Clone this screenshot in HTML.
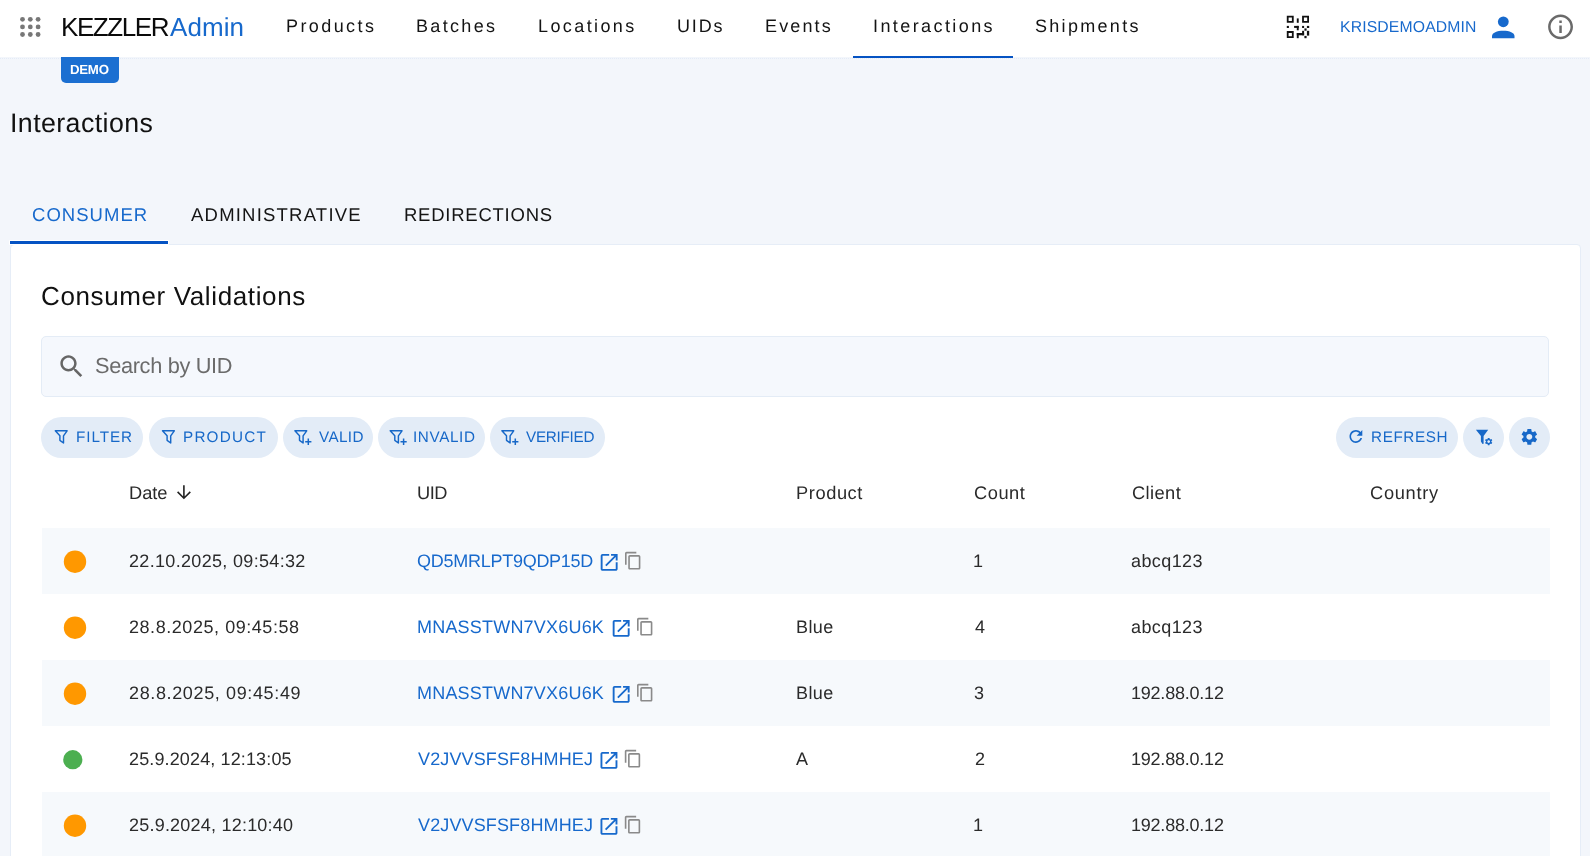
<!DOCTYPE html>
<html><head><meta charset="utf-8"><title>Interactions</title>
<style>
html,body{margin:0;padding:0}
body{width:1590px;height:856px;overflow:hidden;position:relative;background:#f3f6fb;font-family:"Liberation Sans",sans-serif}
.t{position:absolute;line-height:0;white-space:nowrap;text-rendering:geometricPrecision;will-change:transform}
.a{position:absolute}
.chip{position:absolute;top:417px;height:40.5px;border-radius:21px;background:#e3ecf7}
.row{position:absolute;left:41.5px;width:1508px;height:66px}
.st{background:#f6f9fc}
svg{position:absolute;overflow:visible}
</style></head><body>
<div class='a' style='left:0;top:0;width:1590px;height:57px;background:#fff'></div>
<div class='a' style='left:0;top:58px;width:1590px;height:1px;background:repeating-linear-gradient(90deg,#e4ebf7 0 1px,transparent 1px 2px)'></div>
<svg style='left:0;top:0' width='60' height='57'><g fill='#777'><circle cx='22.5' cy='19.3' r='2.4'/><circle cx='22.5' cy='26.9' r='2.4'/><circle cx='22.5' cy='34.5' r='2.4'/><circle cx='30.3' cy='19.3' r='2.4'/><circle cx='30.3' cy='26.9' r='2.4'/><circle cx='30.3' cy='34.5' r='2.4'/><circle cx='38.1' cy='19.3' r='2.4'/><circle cx='38.1' cy='26.9' r='2.4'/><circle cx='38.1' cy='34.5' r='2.4'/></g></svg>
<div class='t' style='left:60.6px;top:27.3px;font-size:26.0px;letter-spacing:-1.417px;color:#0a0a0a;'>KEZZLER</div>
<div class='t' style='left:170.1px;top:27.3px;font-size:26.0px;letter-spacing:0.075px;color:#1769cc;'>Admin</div>
<div class='t' style='left:285.6px;top:25.9px;font-size:18.0px;letter-spacing:2.414px;color:#141414;'>Products</div>
<div class='t' style='left:416px;top:25.9px;font-size:18.0px;letter-spacing:2.333px;color:#141414;'>Batches</div>
<div class='t' style='left:537.6px;top:25.9px;font-size:18.0px;letter-spacing:2.4px;color:#141414;'>Locations</div>
<div class='t' style='left:677px;top:25.9px;font-size:18.0px;letter-spacing:1.833px;color:#141414;'>UIDs</div>
<div class='t' style='left:765.4px;top:25.9px;font-size:18.0px;letter-spacing:2.12px;color:#141414;'>Events</div>
<div class='t' style='left:873px;top:25.9px;font-size:18.0px;letter-spacing:2.409px;color:#141414;'>Interactions</div>
<div class='t' style='left:1035px;top:25.9px;font-size:18.0px;letter-spacing:2.3px;color:#141414;'>Shipments</div>
<div class='a' style='left:852.5px;top:56px;width:160.5px;height:2px;background:#0553c3'></div>
<div class='a' style='left:61px;top:57px;width:58px;height:25.5px;background:#1b6fd1;border-radius:0 0 5px 5px'></div>
<div class='t' style='left:70.3px;top:70.4px;font-size:13.25px;letter-spacing:-0.267px;color:#fff;font-weight:700;'>DEMO</div>
<svg style='left:0;top:0' width='1590' height='57'><g fill='#111'><path fill-rule='evenodd' d='M1286.8 15.8h6.9v6.9h-6.9z M1288.6 17.6v3.3h3.3v-3.3z'/><path fill-rule='evenodd' d='M1302.1 15.8h6.9v6.9h-6.9z M1303.8999999999999 17.6v3.3h3.3v-3.3z'/><path fill-rule='evenodd' d='M1286.8 31.1h6.9v6.9h-6.9z M1288.6 32.9v3.3h3.3v-3.3z'/><rect x='1296.8' y='18.4' width='1.9' height='4.4'/><rect x='1286.8' y='25.9' width='2.1' height='2.1'/><rect x='1294.1' y='25.9' width='4.6' height='2.0'/><rect x='1296.8' y='25.9' width='1.9' height='4.4'/><rect x='1302.1' y='25.9' width='2.0' height='2.1'/><rect x='1306.9' y='25.9' width='2.3' height='2.1'/><rect x='1304.4' y='28.4' width='2.2' height='2.3'/><rect x='1306.9' y='30.8' width='2.3' height='4.8'/><rect x='1302.1' y='30.8' width='2.0' height='4.5'/><rect x='1296.8' y='33.0' width='7.3' height='2.3'/><rect x='1296.8' y='33.0' width='1.9' height='5.2'/><rect x='1304.4' y='35.9' width='2.2' height='2.3'/></g></svg>
<div class='t' style='left:1339.8px;top:27.8px;font-size:15.75px;letter-spacing:0.142px;color:#1769cc;'>KRISDEMOADMIN</div>
<svg style='left:0;top:0' width='1590' height='57'><g fill='#1769cc'><circle cx='1503.3' cy='21.8' r='5.4'/><path d='M1492 38.2v-2.2c0-3.3 5-5.3 11.25-5.3s11.25 2 11.25 5.3v2.2z'/></g></svg>
<svg style='left:0;top:0' width='1590' height='57'><path fill='#6a6a6a' transform='translate(1545.6 11.9) scale(1.245)' d='M11 7h2v2h-2zm0 4h2v6h-2zm1-9C6.48 2 2 6.48 2 12s4.48 10 10 10 10-4.48 10-10S17.52 2 12 2zm0 18c-4.41 0-8-3.59-8-8s3.59-8 8-8 8 3.59 8 8-3.59 8-8 8z'/></svg>
<div class='t' style='left:9.8px;top:123.1px;font-size:26.75px;letter-spacing:0.418px;color:#111;'>Interactions</div>
<div class='t' style='left:31.7px;top:214.5px;font-size:18.5px;letter-spacing:1.029px;color:#1769cc;'>CONSUMER</div>
<div class='t' style='left:190.8px;top:214.5px;font-size:18.5px;letter-spacing:1.215px;color:#141414;'>ADMINISTRATIVE</div>
<div class='t' style='left:403.5px;top:214.5px;font-size:18.5px;letter-spacing:0.755px;color:#141414;'>REDIRECTIONS</div>
<div class='a' style='left:10px;top:244px;width:1569px;height:640px;background:#fff;border:1px solid #e6edf7;border-radius:4px'></div>
<div class='a' style='left:9px;top:240px;width:159.5px;height:5px;background:#fff;border-radius:1px'></div>
<div class='a' style='left:10px;top:241px;width:157.5px;height:3px;background:#0553c3'></div>
<div class='t' style='left:41.3px;top:295.5px;font-size:26.0px;letter-spacing:0.621px;color:#111;'>Consumer Validations</div>
<div class='a' style='left:41px;top:336px;width:1506px;height:58.5px;background:#f5f8fd;border:1px solid #e4ecf6;border-radius:5px'></div>
<svg style='left:0;top:0' width='1590' height='856'><path fill='#666' transform='translate(56.6 351.4) scale(1.252)' d='M15.5 14h-.79l-.28-.27C15.41 12.59 16 11.11 16 9.5 16 5.91 13.09 3 9.5 3S3 5.91 3 9.5 5.91 16 9.5 16c1.61 0 3.09-.59 4.23-1.57l.27.28v.79l5 4.99L20.49 19l-4.99-5zm-6 0C7.01 14 5 11.99 5 9.5S7.01 5 9.5 5 14 7.01 14 9.5 11.99 14 9.5 14z'/></svg>
<div class='t' style='left:94.7px;top:366.2px;font-size:21.75px;letter-spacing:-0.333px;color:#6b6b6b;'>Search by UID</div>
<div class='chip' style='left:41.3px;width:102.2px'></div>
<div class='chip' style='left:148.5px;width:129.1px'></div>
<div class='chip' style='left:282.9px;width:89.8px'></div>
<div class='chip' style='left:378.1px;width:106.9px'></div>
<div class='chip' style='left:490.4px;width:114.4px'></div>
<div class='chip' style='left:1335.8px;width:122.2px'></div>
<div class='chip' style='left:1463.1px;width:40.5px'></div>
<div class='chip' style='left:1509px;width:40.5px'></div>
<svg style='left:0;top:0' width='1590' height='856'><path d='M55.30 430.80 L67.10 430.80 L63.50 435.80 L63.50 443.00 L59.90 440.30 L59.90 435.80Z' fill='none' stroke='#1768c8' stroke-width='1.45' stroke-linejoin='round'/><path d='M162.50 430.80 L174.30 430.80 L170.70 435.80 L170.70 443.00 L167.10 440.30 L167.10 435.80Z' fill='none' stroke='#1768c8' stroke-width='1.45' stroke-linejoin='round'/><path d='M294.90 430.80 L306.70 430.80 L303.10 435.80 L303.10 443.00 L299.50 440.30 L299.50 435.80Z' fill='none' stroke='#1768c8' stroke-width='1.45' stroke-linejoin='round'/><path d='M305.2 441.8h6.2M308.3 438.6v6.4' stroke='#1768c8' stroke-width='1.5'/><path d='M390.20 430.80 L402.00 430.80 L398.40 435.80 L398.40 443.00 L394.80 440.30 L394.80 435.80Z' fill='none' stroke='#1768c8' stroke-width='1.45' stroke-linejoin='round'/><path d='M400.5 441.8h6.2M403.6 438.6v6.4' stroke='#1768c8' stroke-width='1.5'/><path d='M501.90 430.80 L513.70 430.80 L510.10 435.80 L510.10 443.00 L506.50 440.30 L506.50 435.80Z' fill='none' stroke='#1768c8' stroke-width='1.45' stroke-linejoin='round'/><path d='M512.1999999999999 441.8h6.2M515.3 438.6v6.4' stroke='#1768c8' stroke-width='1.5'/></svg>
<div class='t' style='left:76.1px;top:438.2px;font-size:15.25px;letter-spacing:0.92px;color:#1768c8;'>FILTER</div>
<div class='t' style='left:183px;top:438.2px;font-size:15.25px;letter-spacing:1.217px;color:#1768c8;'>PRODUCT</div>
<div class='t' style='left:318.8px;top:438.2px;font-size:15.25px;letter-spacing:0.375px;color:#1768c8;'>VALID</div>
<div class='t' style='left:412.6px;top:438.2px;font-size:15.25px;letter-spacing:0.617px;color:#1768c8;'>INVALID</div>
<div class='t' style='left:525.6px;top:438.2px;font-size:15.25px;letter-spacing:-0.271px;color:#1768c8;'>VERIFIED</div>
<div class='t' style='left:1370.7px;top:438.2px;font-size:15.25px;letter-spacing:0.617px;color:#1768c8;'>REFRESH</div>
<svg style='left:0;top:0' width='1590' height='856'><path fill='#1768c8' transform='translate(1346.3 426.9) scale(0.8)' d='M17.65 6.35C16.2 4.9 14.21 4 12 4c-4.42 0-7.99 3.58-7.99 8s3.57 8 7.99 8c3.73 0 6.84-2.55 7.73-6h-2.08c-.82 2.33-3.04 4-5.65 4-3.31 0-6-2.69-6-6s2.69-6 6-6c1.66 0 3.14.69 4.22 1.78L13 11h7V4l-2.35 2.35z'/></svg>
<svg style='left:0;top:0' width='1590' height='856'><path fill='#1768c8' d='M1475.9 429.7h12.3l-4.6 6.4v7.7l-1.1 0.2-1.6-2.4v-5.5z'/><path fill='#1768c8' transform='translate(1484.1 437.0) scale(0.38)' d='M19.14 12.94c.04-.3.06-.61.06-.94 0-.32-.02-.64-.07-.94l2.03-1.58c.18-.14.23-.41.12-.61l-1.92-3.32c-.12-.22-.37-.29-.59-.22l-2.39.96c-.5-.38-1.03-.7-1.62-.94l-.36-2.54c-.04-.24-.24-.41-.48-.41h-3.84c-.24 0-.43.17-.47.41l-.36 2.54c-.59.24-1.130.57-1.62.94l-2.39-.96c-.22-.08-.47 0-.59.22L2.74 8.87c-.12.21-.08.47.12.61l2.03 1.58c-.05.3-.09.63-.09.94s.02.64.07.94l-2.03 1.58c-.18.14-.23.41-.12.61l1.92 3.32c.12.22.37.29.59.22l2.39-.96c.5.38 1.03.7 1.62.94l.36 2.54c.05.24.24.41.48.41h3.84c.24 0 .44-.17.47-.41l.36-2.54c.59-.24 1.13-.56 1.62-.94l2.39.96c.22.08.47 0 .59-.22l1.92-3.32c.12-.22.07-.47-.12-.61l-2.010-1.58zM12 15.6c-1.98 0-3.6-1.62-3.6-3.6s1.62-3.6 3.6-3.6 3.6 1.62 3.6 3.6-1.62 3.6-3.6 3.6z'/><path fill='#1768c8' transform='translate(1519.5 427.0) scale(0.82)' d='M19.14 12.94c.04-.3.06-.61.06-.94 0-.32-.02-.64-.07-.94l2.03-1.58c.18-.14.23-.41.12-.61l-1.92-3.32c-.12-.22-.37-.29-.59-.22l-2.39.96c-.5-.38-1.03-.7-1.62-.94l-.36-2.54c-.04-.24-.24-.41-.48-.41h-3.84c-.24 0-.43.17-.47.41l-.36 2.54c-.59.24-1.130.57-1.62.94l-2.39-.96c-.22-.08-.47 0-.59.22L2.74 8.87c-.12.21-.08.47.12.61l2.03 1.58c-.05.3-.09.63-.09.94s.02.64.07.94l-2.03 1.58c-.18.14-.23.41-.12.61l1.92 3.32c.12.22.37.29.59.22l2.39-.96c.5.38 1.03.7 1.62.94l.36 2.54c.05.24.24.41.48.41h3.84c.24 0 .44-.17.47-.41l.36-2.54c.59-.24 1.13-.56 1.62-.94l2.39.96c.22.08.47 0 .59-.22l1.92-3.32c.12-.22.07-.47-.12-.61l-2.010-1.58zM12 15.6c-1.98 0-3.6-1.62-3.6-3.6s1.62-3.6 3.6-3.6 3.6 1.62 3.6 3.6-1.62 3.6-3.6 3.6z'/></svg>
<div class='t' style='left:128.7px;top:492.8px;font-size:18.25px;letter-spacing:-0.033px;color:#2a2a2a;'>Date</div>
<div class='t' style='left:417.4px;top:492.8px;font-size:18.25px;letter-spacing:-0.5px;color:#2a2a2a;'>UID</div>
<div class='t' style='left:796.2px;top:492.8px;font-size:18.25px;letter-spacing:0.583px;color:#2a2a2a;'>Product</div>
<div class='t' style='left:974px;top:492.8px;font-size:18.25px;letter-spacing:0.525px;color:#2a2a2a;'>Count</div>
<div class='t' style='left:1131.6px;top:492.8px;font-size:18.25px;letter-spacing:0.42px;color:#2a2a2a;'>Client</div>
<div class='t' style='left:1370.1px;top:492.8px;font-size:18.25px;letter-spacing:0.7px;color:#2a2a2a;'>Country</div>
<svg style='left:0;top:0' width='1590' height='856'><path d='M183.9 485.2V497.6M177.6 491.9L183.9 498.2L190.3 491.9' fill='none' stroke='#222' stroke-width='1.6'/></svg>
<div class='row st' style='top:528px'></div>
<div class='row' style='top:594px'></div>
<div class='row st' style='top:660px'></div>
<div class='row' style='top:726px'></div>
<div class='row st' style='top:792px'></div>
<svg style='left:0;top:0' width='1590' height='856'><circle cx='75.0' cy='561.7' r='11.2' fill='#ff9800'/><circle cx='75.0' cy='627.7' r='11.2' fill='#ff9800'/><circle cx='75.0' cy='693.7' r='11.2' fill='#ff9800'/><circle cx='72.8' cy='759.7' r='9.6' fill='#4caf50'/><circle cx='75.0' cy='825.7' r='11.2' fill='#ff9800'/></svg>
<div class='t' style='left:128.8px;top:561.3px;font-size:18.0px;letter-spacing:0.326px;color:#2b2b2b;'>22.10.2025, 09:54:32</div>
<div class='t' style='left:417.4px;top:561.3px;font-size:18.0px;letter-spacing:-0.264px;color:#1769cc;'>QD5MRLPT9QDP15D</div>
<div class='t' style='left:128.6px;top:627.3px;font-size:18.0px;letter-spacing:0.55px;color:#2b2b2b;'>28.8.2025, 09:45:58</div>
<div class='t' style='left:417.4px;top:627.3px;font-size:18.0px;letter-spacing:0.2px;color:#1769cc;'>MNASSTWN7VX6U6K</div>
<div class='t' style='left:128.6px;top:693.3px;font-size:18.0px;letter-spacing:0.633px;color:#2b2b2b;'>28.8.2025, 09:45:49</div>
<div class='t' style='left:417.4px;top:693.3px;font-size:18.0px;letter-spacing:0.2px;color:#1769cc;'>MNASSTWN7VX6U6K</div>
<div class='t' style='left:128.6px;top:759.3px;font-size:18.0px;letter-spacing:0.133px;color:#2b2b2b;'>25.9.2024, 12:13:05</div>
<div class='t' style='left:418.4px;top:759.3px;font-size:18.0px;letter-spacing:0.136px;color:#1769cc;'>V2JVVSFSF8HMHEJ</div>
<div class='t' style='left:128.6px;top:825.3px;font-size:18.0px;letter-spacing:0.217px;color:#2b2b2b;'>25.9.2024, 12:10:40</div>
<div class='t' style='left:418.4px;top:825.3px;font-size:18.0px;letter-spacing:0.136px;color:#1769cc;'>V2JVVSFSF8HMHEJ</div>
<div class='t' style='left:796.4px;top:627.3px;font-size:18.0px;letter-spacing:0.433px;color:#2b2b2b;'>Blue</div>
<div class='t' style='left:796.4px;top:693.3px;font-size:18.0px;letter-spacing:0.433px;color:#2b2b2b;'>Blue</div>
<div class='t' style='left:973.0px;top:561.3px;font-size:18px;letter-spacing:0px;color:#2b2b2b;'>1</div>
<div class='t' style='left:974.7px;top:627.3px;font-size:18px;letter-spacing:0px;color:#2b2b2b;'>4</div>
<div class='t' style='left:973.7px;top:693.3px;font-size:18px;letter-spacing:0px;color:#2b2b2b;'>3</div>
<div class='t' style='left:973.0px;top:825.3px;font-size:18px;letter-spacing:0px;color:#2b2b2b;'>1</div>
<div class='t' style='left:1131.4px;top:561.3px;font-size:18.0px;letter-spacing:0.4px;color:#2b2b2b;'>abcq123</div>
<div class='t' style='left:1131.4px;top:627.3px;font-size:18.0px;letter-spacing:0.4px;color:#2b2b2b;'>abcq123</div>
<div class='t' style='left:1131.4px;top:693.3px;font-size:18.0px;letter-spacing:-0.22px;color:#2b2b2b;'>192.88.0.12</div>
<div class='t' style='left:1131.4px;top:759.3px;font-size:18.0px;letter-spacing:-0.22px;color:#2b2b2b;'>192.88.0.12</div>
<div class='t' style='left:1131.4px;top:825.3px;font-size:18.0px;letter-spacing:-0.22px;color:#2b2b2b;'>192.88.0.12</div>
<div class='t' style='left:796.4px;top:759.3px;font-size:18.0px;letter-spacing:0.433px;color:#2b2b2b;'>A</div>
<div class='t' style='left:974.7px;top:759.3px;font-size:18px;letter-spacing:0px;color:#2b2b2b;'>2</div>
<svg style='left:0;top:0' width='1590' height='856'><path fill='#1769cc' transform='translate(597.88 551.08) scale(0.94)' d='M19 19H5V5h7V3H5c-1.11 0-2 .9-2 2v14c0 1.1.89 2 2 2h14c1.1 0 2-.9 2-2v-7h-2v7zM14 3v2h3.59l-9.83 9.83 1.41 1.41L19 6.41V10h2V3h-7z'/><path fill='#8a8a8a' transform='translate(623.38 550.99) scale(0.81)' d='M16 1H4c-1.1 0-2 .9-2 2v14h2V3h12V1zm3 4H8c-1.1 0-2 .9-2 2v14c0 1.1.9 2 2 2h11c1.1 0 2-.9 2-2V7c0-1.1-.9-2-2-2zm0 16H8V7h11v14z'/><path fill='#1769cc' transform='translate(609.88 617.08) scale(0.94)' d='M19 19H5V5h7V3H5c-1.11 0-2 .9-2 2v14c0 1.1.89 2 2 2h14c1.1 0 2-.9 2-2v-7h-2v7zM14 3v2h3.59l-9.83 9.83 1.41 1.41L19 6.41V10h2V3h-7z'/><path fill='#8a8a8a' transform='translate(635.38 616.99) scale(0.81)' d='M16 1H4c-1.1 0-2 .9-2 2v14h2V3h12V1zm3 4H8c-1.1 0-2 .9-2 2v14c0 1.1.9 2 2 2h11c1.1 0 2-.9 2-2V7c0-1.1-.9-2-2-2zm0 16H8V7h11v14z'/><path fill='#1769cc' transform='translate(609.88 683.08) scale(0.94)' d='M19 19H5V5h7V3H5c-1.11 0-2 .9-2 2v14c0 1.1.89 2 2 2h14c1.1 0 2-.9 2-2v-7h-2v7zM14 3v2h3.59l-9.83 9.83 1.41 1.41L19 6.41V10h2V3h-7z'/><path fill='#8a8a8a' transform='translate(635.38 682.99) scale(0.81)' d='M16 1H4c-1.1 0-2 .9-2 2v14h2V3h12V1zm3 4H8c-1.1 0-2 .9-2 2v14c0 1.1.9 2 2 2h11c1.1 0 2-.9 2-2V7c0-1.1-.9-2-2-2zm0 16H8V7h11v14z'/><path fill='#1769cc' transform='translate(597.68 749.08) scale(0.94)' d='M19 19H5V5h7V3H5c-1.11 0-2 .9-2 2v14c0 1.1.89 2 2 2h14c1.1 0 2-.9 2-2v-7h-2v7zM14 3v2h3.59l-9.83 9.83 1.41 1.41L19 6.41V10h2V3h-7z'/><path fill='#8a8a8a' transform='translate(623.18 748.99) scale(0.81)' d='M16 1H4c-1.1 0-2 .9-2 2v14h2V3h12V1zm3 4H8c-1.1 0-2 .9-2 2v14c0 1.1.9 2 2 2h11c1.1 0 2-.9 2-2V7c0-1.1-.9-2-2-2zm0 16H8V7h11v14z'/><path fill='#1769cc' transform='translate(597.68 815.08) scale(0.94)' d='M19 19H5V5h7V3H5c-1.11 0-2 .9-2 2v14c0 1.1.89 2 2 2h14c1.1 0 2-.9 2-2v-7h-2v7zM14 3v2h3.59l-9.83 9.83 1.41 1.41L19 6.41V10h2V3h-7z'/><path fill='#8a8a8a' transform='translate(623.18 814.99) scale(0.81)' d='M16 1H4c-1.1 0-2 .9-2 2v14h2V3h12V1zm3 4H8c-1.1 0-2 .9-2 2v14c0 1.1.9 2 2 2h11c1.1 0 2-.9 2-2V7c0-1.1-.9-2-2-2zm0 16H8V7h11v14z'/></svg>
</body></html>
